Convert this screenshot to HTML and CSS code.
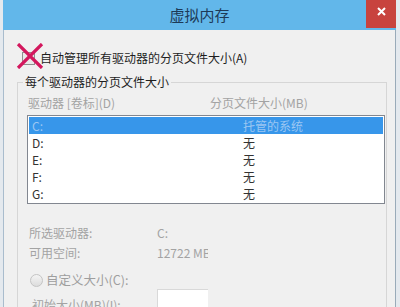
FILE: index.html
```html
<!DOCTYPE html>
<html lang="zh-CN">
<head>
    <meta charset="UTF-8">
    <title>虚拟内存</title>
    <link rel="stylesheet" href="styles.css">
</head>
<body>

    <div class="window">
        <div class="titlebar">
            <span class="title">虚拟内存</span>
            <button class="close" aria-label="关闭">
                <svg width="9" height="9" viewBox="0 0 9 9">
                    <path d="M1 1L8 8M8 1L1 8" stroke="#fff" stroke-width="2" fill="none"/>
                </svg>
            </button>
        </div>

        <div class="content">
            <label class="auto">
                <span class="checkbox"></span>
                <span>自动管理所有驱动器的分页文件大小(A)</span>
                <svg class="cross" width="28" height="26" viewBox="0 0 28 26">
                    <path d="M2 1L26 25M26 1L2 25" stroke="#d3175d" stroke-width="3.2" fill="none"/>
                </svg>
            </label>

            <fieldset class="group">
                <legend>每个驱动器的分页文件大小</legend>

                <div class="cols">
                    <span>驱动器 [卷标](D)</span>
                    <span>分页文件大小(MB)</span>
                </div>

                <div class="list">
                    <div class="row selected"><span>C:</span><span>托管的系统</span></div>
                    <div class="row"><span>D:</span><span>无</span></div>
                    <div class="row"><span>E:</span><span>无</span></div>
                    <div class="row"><span>F:</span><span>无</span></div>
                    <div class="row"><span>G:</span><span>无</span></div>
                </div>

                <div class="info">
                    <span>所选驱动器:</span>
                    <span class="value">C:</span>
                    <span>可用空间:</span>
                    <span class="value">12722 MB</span>
                </div>

                <label class="custom">
                    <span class="radio"></span>
                    <span>自定义大小(C):</span>
                </label>

                <div class="initial">
                    <span>初始大小(MB)(I):</span>
                    <span class="field"></span>
                </div>
            </fieldset>
        </div>
    </div>

</body>
</html>
```

FILE: styles.css
```css
body {
    margin: 0;
    width: 400px;
    height: 307px;
    overflow: hidden;
    background-color: #e4e9ee;
    font-family: "Noto Sans CJK SC", "Noto Sans", sans-serif;
    font-size: 12px;
    line-height: 16px;
    color: #1e1e1e;
}
.window {
    margin-left: 3px;
    width: 393px;
    height: 307px;
    display: flex;
    flex-direction: column;
}
.titlebar {
    flex: none;
    height: 30px;
    display: grid;
    grid-template-columns: 1fr auto 1fr;
    background-color: #62b7ea;
}
.title {
    grid-column: 2;
    font-size: 15px;
    line-height: 30px;
    color: #1d3a57;
}
.close {
    grid-column: 3;
    justify-self: end;
    width: 30px;
    height: 28px;
    padding: 7px 0 0;
    border: none;
    background-color: #c8433e;
    display: flex;
    justify-content: center;
    align-items: flex-start;
}
.content {
    flex: 1;
    padding: 20px 8px 0 13px;
    background-color: #f0f0f0;
    border-left: 1px solid #a9bccd;
    border-right: 1px solid #9aabb9;
    overflow: hidden;
}
.auto {
    position: relative;
    display: flex;
    align-items: center;
    gap: 5px;
    height: 16px;
    padding-left: 5px;
}
.checkbox {
    width: 11px;
    height: 11px;
    border: 1px solid #8f8f8f;
    background-color: #e9e9e9;
}
.cross {
    position: absolute;
    left: -1px;
    top: -7px;
}
.group {
    margin: 8px 0 0;
    padding: 5px 1px 0 9px;
    border: 1px solid #d6d6d6;
    min-width: 0;
}
.group legend {
    margin-left: -4px;
    padding: 0 2px;
    line-height: 16px;
}
.cols {
    display: grid;
    grid-template-columns: 182px 1fr;
    margin-bottom: 4px;
    padding-left: 1px;
    color: #a3a3a3;
}
.list {
    padding: 1px;
    border: 1px solid #828790;
    background-color: #fff;
}
.row {
    display: grid;
    grid-template-columns: 214px 1fr;
    height: 17px;
    line-height: 17px;
    color: #333;
}
.row span:first-child {
    padding-left: 3px;
}
.row.selected {
    background-color: #3796ea;
    color: #9cc6f2;
}
.info {
    display: grid;
    grid-template-columns: 128px 51px;
    row-gap: 4px;
    margin-top: 21px;
    padding-left: 2px;
    color: #a3a3a3;
}
.value {
    overflow: hidden;
    white-space: nowrap;
}
.custom {
    display: flex;
    align-items: center;
    gap: 3px;
    margin-top: 11px;
    padding-left: 3px;
    color: #9e9e9e;
    font-size: 12.5px;
}
.radio {
    width: 11px;
    height: 11px;
    border: 1px solid #c4c4c4;
    border-radius: 50%;
    background: linear-gradient(#f4f4f4, #dcdcdc);
}
.initial {
    display: grid;
    grid-template-columns: 125px 51px;
    margin-top: 1px;
    padding-left: 5px;
    color: #a3a3a3;
}
.initial span:first-child {
    margin-top: 8px;
}
.field {
    height: 22px;
    border: 1px solid #d9d9d9;
    border-right: none;
    background-color: #fff;
}
```
